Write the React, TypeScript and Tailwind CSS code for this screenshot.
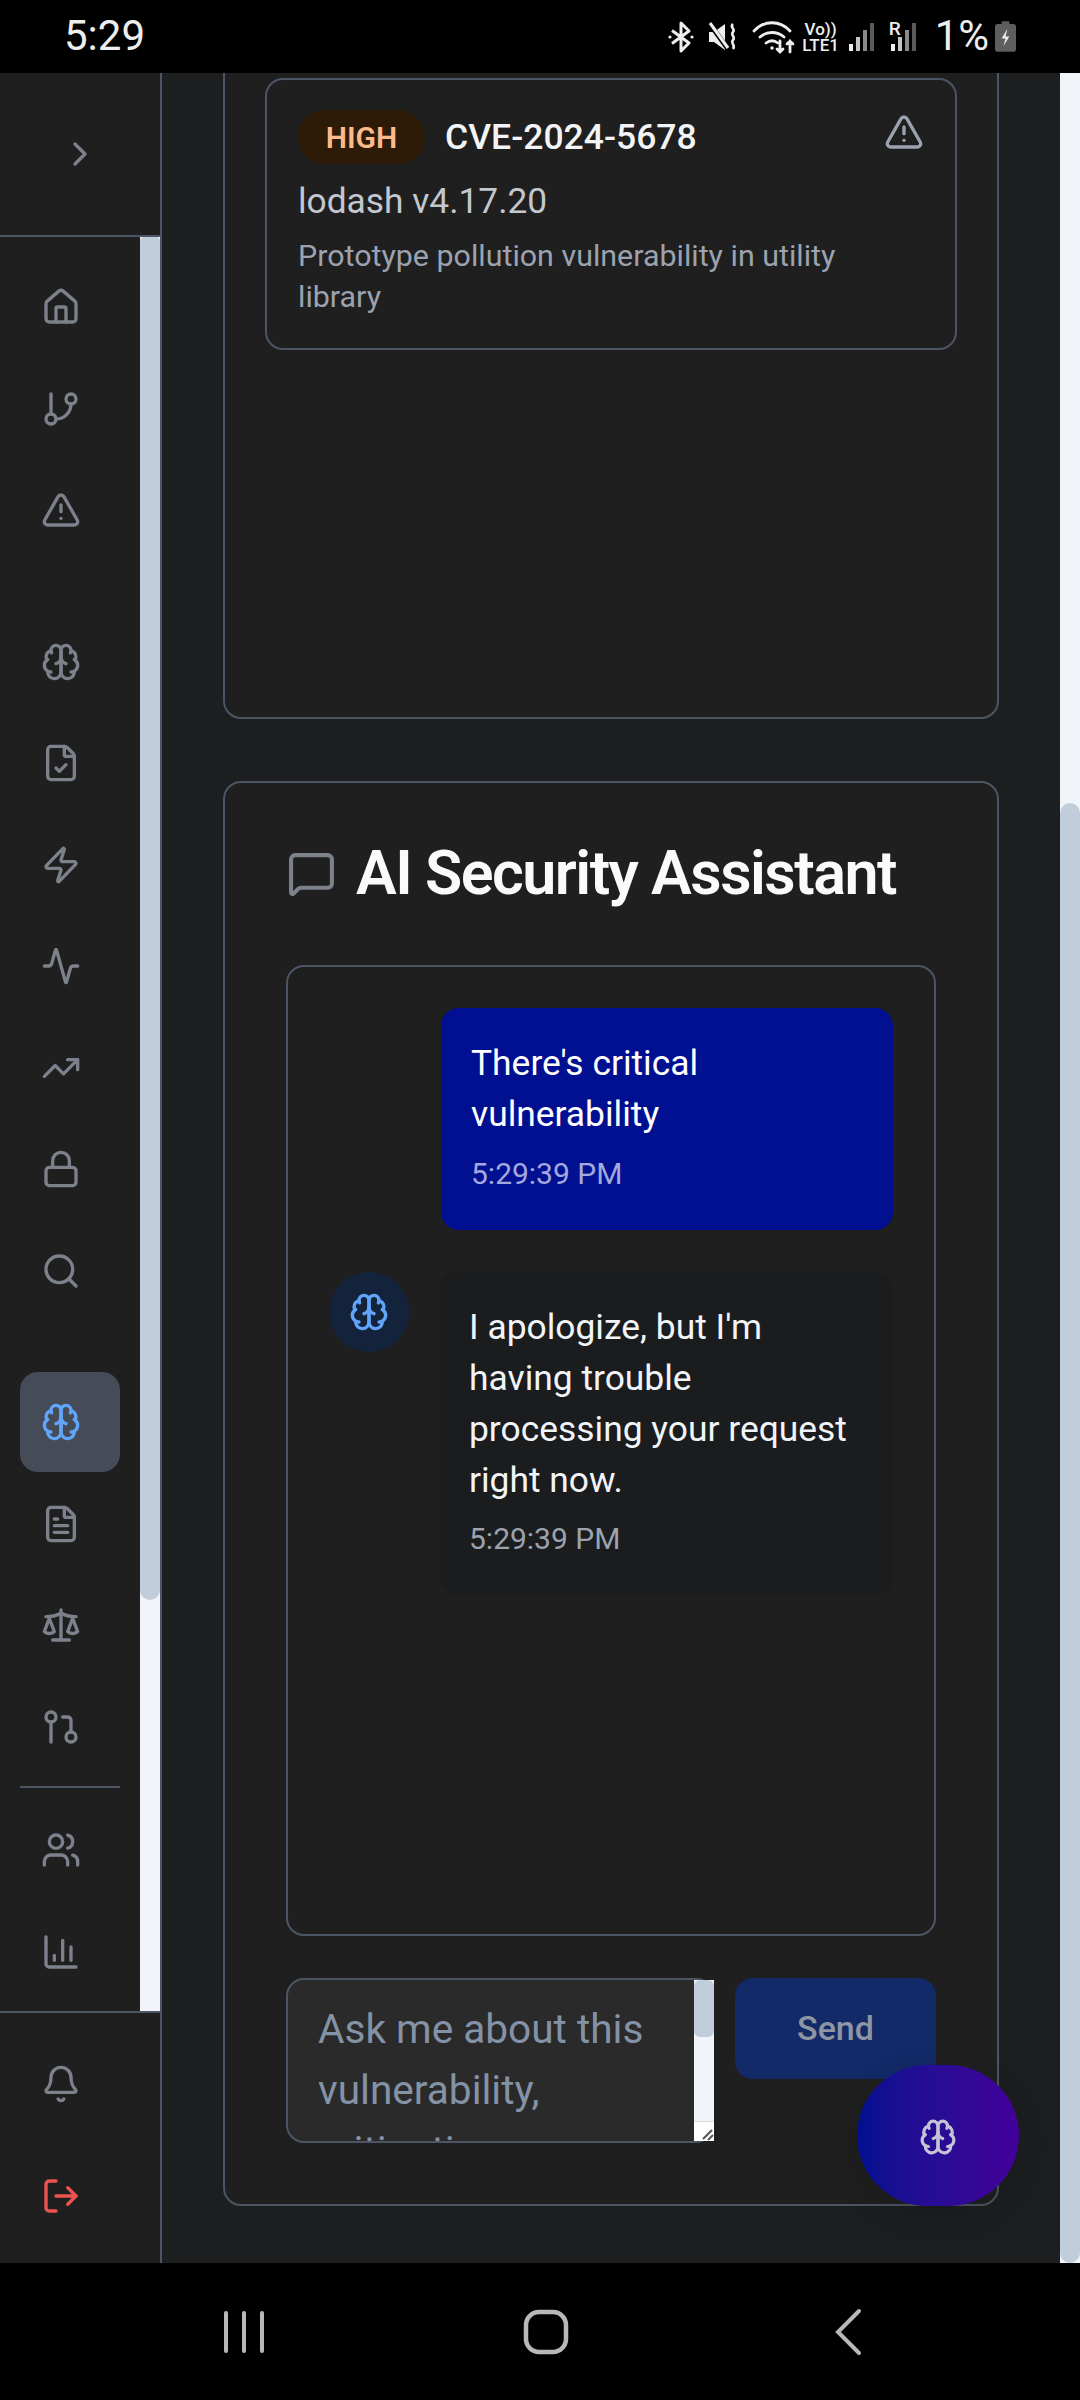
import {
  Activity,
  BarChart3,
  Bell,
  ChevronRight,
  FileCheck,
  FileText,
  GitBranch,
  GitPullRequest,
  Home,
  Lock,
  LogOut,
  MessageSquare,
  Scale,
  Search,
  TrendingUp,
  TriangleAlert,
  Users,
  Zap,
} from "lucide-react";

const font = "font-['Roboto',sans-serif]";

// the lucide brain in the package is a newer drawing, this one has the centre stem
function Brain({ size = 24, strokeWidth = 2, className }: { size?: number; strokeWidth?: number; className?: string }) {
  return (
    <svg
      width={size}
      height={size}
      viewBox="0 0 24 24"
      fill="none"
      stroke="currentColor"
      strokeWidth={strokeWidth}
      strokeLinecap="round"
      strokeLinejoin="round"
      className={className}
    >
      <path d="M12 5a3 3 0 1 0-5.997.125 4 4 0 0 0-2.526 5.77 4 4 0 0 0 .556 6.588A4 4 0 1 0 12 18Z" />
      <path d="M12 5a3 3 0 1 1 5.997.125 4 4 0 0 1 2.526 5.77 4 4 0 0 1-.556 6.588A4 4 0 1 1 12 18Z" />
      <path d="M15 13a4.5 4.5 0 0 1-3-4 4.5 4.5 0 0 1-3 4" />
      <path d="M17.599 6.5a3 3 0 0 0 .399-1.375" />
      <path d="M6.003 5.125A3 3 0 0 0 6.401 6.5" />
      <path d="M3.477 10.896a4 4 0 0 1 .585-.396" />
      <path d="M19.938 10.5a4 4 0 0 1 .585.396" />
      <path d="M6 18a4 4 0 0 1-1.967-.516" />
      <path d="M19.967 17.484A4 4 0 0 1 18 18" />
    </svg>
  );
}

function NavIcon({ icon: Icon, active }: { icon: typeof Home | typeof Brain; active?: boolean }) {
  return (
    <div
      className={`mb-[1.5px] h-[100px] w-[100px] shrink-0 rounded-[18px] pl-[21px] flex items-center ${
        active ? "bg-[#454c58]" : ""
      }`}
    >
      <Icon size={40} strokeWidth={2} className={active ? "text-[#60a5fa]" : "text-[#7c818c]"} />
    </div>
  );
}

function Signal({ roaming }: { roaming?: boolean }) {
  return (
    <div className="relative w-[27px] h-[28px] flex items-end gap-[3px]">
      {roaming && <span className="absolute left-[-2px] top-[-4px] text-[19px] leading-none font-medium text-[#eeeeee]">R</span>}
      <div className="w-[4px] h-[7px] bg-[#eeeeee]" />
      <div className="w-[4px] h-[14px] bg-[#c4c4c4]" />
      <div className="w-[4px] h-[21px] bg-[#8a8a8a]" />
      <div className="w-[4px] h-[28px] bg-[#5a5a5a]" />
    </div>
  );
}

function StatusBar() {
  return (
    <div className="h-[73px] shrink-0 bg-black text-[#eeeeee] flex items-center justify-between pl-[64px] pr-[64px]">
      <span className="text-[42px] leading-none mt-[-2px]">5:29</span>
      <div className="flex items-center">
        <svg width="26" height="32" viewBox="0 0 26 32" fill="none" stroke="#eeeeee" strokeWidth="3" strokeLinejoin="round" className="mr-[14px]">
          <path d="M4 9.5 21 22l-8 8V2l8 8L4 22.5" />
          <circle cx="2" cy="16" r="1.6" fill="#eeeeee" stroke="none" />
          <circle cx="24" cy="16" r="1.6" fill="#eeeeee" stroke="none" />
        </svg>
        <svg width="29" height="30" viewBox="0 0 29 30" fill="none" className="mr-[15px]">
          <path d="M1 10h5l11-8v26l-11-8H1z" fill="#eeeeee" />
          <path d="M1 1l19 26" stroke="#000" strokeWidth="5" />
          <path d="M2 1l18 25" stroke="#eeeeee" strokeWidth="3" />
          <path d="M25 2c-4 3 3 5 0 8s3 5 0 8 3 5 0 9" stroke="#eeeeee" strokeWidth="2.6" />
        </svg>
        <svg width="44" height="34" viewBox="0 0 44 34" fill="none" stroke="#eeeeee" strokeWidth="2.8" strokeLinecap="round" className="mr-[6px]">
          <path d="M2 11c10-11 26-11 36 0" />
          <path d="M8 17c7-6 17-6 24 0" />
          <path d="M14 23c4-3 8-3 12 0" />
          <circle cx="20" cy="28" r="1.8" fill="#eeeeee" stroke="none" />
          <path d="M28 21v11m-3-3 3 3 3-3M38 32V21m-3 3 3-3 3 3" />
        </svg>
        <div className="flex flex-col items-center text-[17px] leading-[16px] font-medium mr-[9px] w-[38px]">
          <span>Vo))</span>
          <span>LTE1</span>
        </div>
        <Signal />
        <div className="w-[15px]" />
        <Signal roaming />
        <span className="text-[42px] leading-none ml-[17px] mr-[6px] mt-[-2px]">1%</span>
        <svg width="21" height="31" viewBox="0 0 22 32">
          <path d="M7 0h8v3h4a3 3 0 0 1 3 3v23a3 3 0 0 1-3 3H3a3 3 0 0 1-3-3V6a3 3 0 0 1 3-3h4z" fill="#5e5e5e" />
          <path d="M13 8l-6 10h4l-2 8 6-10h-4z" fill="#eeeeee" />
        </svg>
      </div>
    </div>
  );
}

function Sidebar() {
  return (
    <aside className="w-[162px] shrink-0 flex flex-col bg-[#1f1f1f] border-r-2 border-[#4b5563]">
      <div className="h-[164px] shrink-0 border-b-2 border-[#4b5563] flex items-center pl-[60px]">
        <ChevronRight size={40} strokeWidth={2} className="text-[#7c818c]" />
      </div>
      <div className="flex-1 min-h-0 flex overflow-hidden">
        <nav className="w-[140px] shrink-0 pt-[20px] pl-[20px] flex flex-col">
          <NavIcon icon={Home} />
          <NavIcon icon={GitBranch} />
          <NavIcon icon={TriangleAlert} />
          <div className="h-[50px] shrink-0" />
          <NavIcon icon={Brain} />
          <NavIcon icon={FileCheck} />
          <NavIcon icon={Zap} />
          <NavIcon icon={Activity} />
          <NavIcon icon={TrendingUp} />
          <NavIcon icon={Lock} />
          <NavIcon icon={Search} />
          <div className="h-[50px] shrink-0" />
          <NavIcon icon={Brain} active />
          <NavIcon icon={FileText} />
          <NavIcon icon={Scale} />
          <NavIcon icon={GitPullRequest} />
          <div className="h-[2px] w-[100px] bg-[#4b5563] mt-[8px] mb-[12px] shrink-0" />
          <NavIcon icon={Users} />
          <NavIcon icon={BarChart3} />
        </nav>
        <div className="w-[20px] shrink-0 bg-[#f1f5f9]">
          <div className="h-[1363px] bg-[#c2cddb] rounded-b-[10px] rounded-t-[4px]" />
        </div>
      </div>
      <div className="h-[252px] shrink-0 border-t-2 border-[#4b5563] pl-[41px] pt-[51px] flex flex-col gap-[72px]">
        <Bell size={40} strokeWidth={2} className="text-[#7c818c]" />
        <LogOut size={40} strokeWidth={2} className="text-[#ef5350]" />
      </div>
    </aside>
  );
}

function CveCard() {
  return (
    <div className="h-[272px] rounded-[18px] border-2 border-[#4b5563] pt-[30px] pl-[31px] pr-[31px]">
      <div className="flex items-start justify-between">
        <div className="flex items-center gap-[20px]">
          <span className="h-[54px] w-[127px] rounded-full bg-[#2d1a07] text-[#fdba8c] text-[30px] font-semibold flex items-center justify-center">
            HIGH
          </span>
          <span className="text-[35.5px] font-medium text-[#f3f4f6] mt-[1px]">CVE-2024-5678</span>
        </div>
        <TriangleAlert size={40} strokeWidth={2} className="text-[#9ca3af] mt-[2px]" />
      </div>
      <div className="text-[35.3px] leading-[50px] text-[#c3c7cf] mt-[12px]">lodash v4.17.20</div>
      <p className="max-w-[600px] text-[30.4px] leading-[40.5px] text-[#9ca3af] mt-[10px]">Prototype pollution vulnerability in utility library</p>
    </div>
  );
}

function ChatBox() {
  return (
    <div className="relative h-[971px] rounded-[18px] border-2 border-[#4b5563] pt-[41px] pr-[41px] pl-[41px]">
      <div className="ml-[112px] h-[222px] rounded-[18px] bg-[#001090] pt-[30px] px-[30px]">
        <p className="text-[35.4px] leading-[51px] text-white">There's critical vulnerability</p>
        <p className="text-[30px] leading-[41px] text-[#a3a8de] mt-[13px]">5:29:39 PM</p>
      </div>
      <div className="flex mt-[42px] gap-[31px]">
        <div className="w-[80px] h-[80px] rounded-full bg-[#14233c] flex items-center justify-center shrink-0">
          <Brain size={40} strokeWidth={2} className="text-[#60a5fa]" />
        </div>
        <div className="w-[453px] h-[323px] rounded-[18px] bg-[#1b1c1e] pt-[30px] px-[29px]">
          <p className="text-[35.4px] leading-[51px] text-[#f1f5f9]">I apologize, but I'm having trouble processing your request right now.</p>
          <p className="text-[30px] leading-[41px] text-[#9ca3af] mt-[12px]">5:29:39 PM</p>
        </div>
      </div>
    </div>
  );
}

function Composer() {
  return (
    <div className="mt-[42px] flex items-start gap-[21px]">
      <div className="relative w-[428px] h-[165px]">
        <div className="h-full overflow-hidden rounded-[18px] border-2 border-[#4b5563] bg-[#2a2a2a] pl-[30px] pt-[19px]">
          <p className="w-[360px] text-[40.6px] leading-[61px] text-[#8492a6]">Ask me about this vulnerability, mitigation</p>
        </div>
        <div className="absolute right-0 top-[2px] bottom-[2px] w-[20px] bg-[#f1f5f9]">
          <div className="h-[57px] rounded-[6px] bg-[#c2cddb]" />
          <div className="absolute bottom-0 w-full h-[20px] bg-white border-t border-[#dddddd] flex items-end justify-end">
            <svg width="14" height="14" viewBox="0 0 14 14" fill="none" stroke="#555555" strokeWidth="2">
              <path d="M12 3 3 12M13 8l-5 5" />
            </svg>
          </div>
        </div>
      </div>
      <div className="w-[201px] h-[101px] rounded-[18px] bg-[#132a68] text-[#8e95a3] text-[34px] font-medium flex items-center justify-center">
        Send
      </div>
    </div>
  );
}

export default function App() {
  return (
    <div className={`${font} relative w-[1080px] h-[2400px] flex flex-col overflow-hidden bg-black`}>
      <StatusBar />
      <div className="flex-1 min-h-0 flex">
        <Sidebar />
        <main className="flex-1 min-w-0 bg-[#1d1e20] px-[61px]">
          <section className="h-[646px] rounded-b-[18px] border-2 border-t-0 border-[#4b5563] bg-[#1f1f1f] pt-[5px] px-[40px]">
            <CveCard />
          </section>
          <section className="mt-[62px] h-[1425px] rounded-[18px] border-2 border-[#4b5563] bg-[#1f1f1f] pt-[49px] px-[61px]">
            <div className="flex items-center gap-[20px] h-[80px] pl-[1px]">
              <MessageSquare size={49} strokeWidth={2} className="text-[#7c818c] mt-[2px]" />
              <h2 className="text-[61px] leading-[80px] mt-[2px] font-semibold tracking-[-1.5px] text-[#f8fafc]">AI Security Assistant</h2>
            </div>
            <div className="mt-[53px]">
              <ChatBox />
              <Composer />
            </div>
          </section>
        </main>
        <div className="w-[20px] shrink-0 bg-[#f1f5f9] flex flex-col">
          <div className="h-[730px] shrink-0" />
          <div className="flex-1 bg-[#c2cddb] rounded-[10px]" />
        </div>
      </div>
      <div className="h-[137px] shrink-0 bg-black flex items-center pl-[222px]">
        <svg width="44" height="44" viewBox="0 0 44 44" fill="#b8b8b8">
          <rect x="2" y="1" width="4" height="42" rx="2" />
          <rect x="20" y="1" width="4" height="42" rx="2" />
          <rect x="38" y="1" width="4" height="42" rx="2" />
        </svg>
        <svg width="46" height="46" viewBox="0 0 46 46" fill="none" stroke="#b8b8b8" strokeWidth="4.5" className="ml-[257px]">
          <rect x="3" y="3" width="40" height="40" rx="13" />
        </svg>
        <svg width="28" height="48" viewBox="0 0 28 48" fill="none" stroke="#b8b8b8" strokeWidth="4" strokeLinecap="round" className="ml-[265px]">
          <path d="M25 3 4 24l21 21" />
        </svg>
      </div>
      <div className="absolute left-[857px] top-[2065px] w-[162px] h-[141px] rounded-full bg-gradient-to-r from-[#001090] to-[#42009a] shadow-[0_10px_30px_rgba(0,0,0,0.15)] flex items-center justify-center">
        <Brain size={38} strokeWidth={2} className="text-[#c4c4d4] mt-[2px]" />
      </div>
    </div>
  );
}
